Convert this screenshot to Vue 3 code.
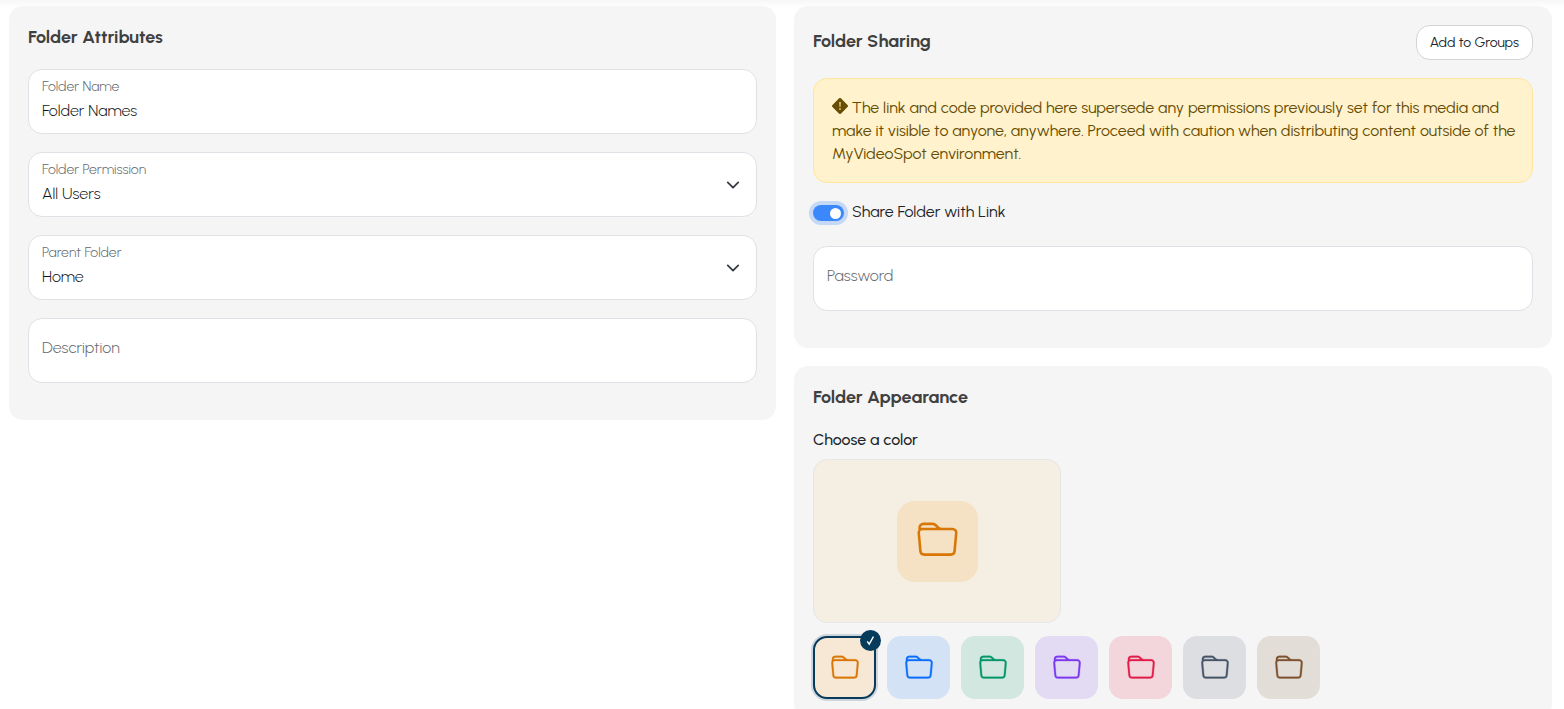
<script setup>
import { ref, computed } from 'vue'

const folderName = ref('Folder Names')
const permission = ref('All Users')
const parent = ref('Home')
const description = ref('')
const shareLink = ref(true)
const password = ref('')

const colors = [
  { name: 'Orange', icon: '#d97706', tint: '#f6e8d4', preview: '#f5eee2', tile: '#f5e1c4' },
  { name: 'Blue', icon: '#0d6efd', tint: '#d4e2f6', preview: '#e4ebf5', tile: '#c6daf7' },
  { name: 'Green', icon: '#059669', tint: '#d1e7df', preview: '#e3eeea', tile: '#c1e0d5' },
  { name: 'Purple', icon: '#7c3aed', tint: '#e3daf4', preview: '#ece7f4', tile: '#dacdf4' },
  { name: 'Red', icon: '#e11d48', tint: '#f3d5dc', preview: '#f4e5e8', tile: '#f2c6d0' },
  { name: 'Slate', icon: '#475569', tint: '#dcdee1', preview: '#e8e9eb', tile: '#d0d4d8' },
  { name: 'Brown', icon: '#7c5230', tint: '#e3ddd7', preview: '#ece9e6', tile: '#dad2ca' }
]
const selectedName = ref('Orange')
const selected = computed(() => colors.find((c) => c.name === selectedName.value))

const folderPath =
  'M.54 3.87.5 3a2 2 0 0 1 2-2h3.672a2 2 0 0 1 1.414.586l.828.828A2 2 0 0 0 9.828 3h3.982a2 2 0 0 1 1.992 2.181l-.637 7A2 2 0 0 1 13.174 14H2.826a2 2 0 0 1-1.991-1.819l-.637-7a2 2 0 0 1 .342-1.31zM2.19 4a1 1 0 0 0-.996 1.09l.637 7a1 1 0 0 0 .995.91h10.348a1 1 0 0 0 .995-.91l.637-7A1 1 0 0 0 13.81 4H2.19zm4.69-1.707A1 1 0 0 0 6.172 2H2.5a1 1 0 0 0-1 .981l.006.139C1.72 3.042 1.95 3 2.19 3h5.396l-.707-.707z'
</script>

<template>
  <main class="page">
    <section class="panel">
      <h2 class="title">Folder Attributes</h2>
      <div class="fields">
        <div class="field">
          <div class="stack">
            <label for="folder-name">Folder Name</label>
            <input id="folder-name" v-model="folderName" type="text" />
          </div>
        </div>
        <div class="field">
          <div class="stack">
            <label for="folder-permission">Folder Permission</label>
            <select id="folder-permission" v-model="permission">
              <option>All Users</option>
            </select>
          </div>
          <svg class="chevron" viewBox="0 0 16 16" aria-hidden="true"><path d="m2 5 6 6 6-6" /></svg>
        </div>
        <div class="field">
          <div class="stack">
            <label for="parent-folder">Parent Folder</label>
            <select id="parent-folder" v-model="parent">
              <option>Home</option>
            </select>
          </div>
          <svg class="chevron" viewBox="0 0 16 16" aria-hidden="true"><path d="m2 5 6 6 6-6" /></svg>
        </div>
        <div class="field empty">
          <input v-model="description" type="text" placeholder="Description" aria-label="Description" />
        </div>
      </div>
    </section>

    <div class="column">
      <section class="panel">
        <div class="header">
          <h2 class="title">Folder Sharing</h2>
          <button class="groups" type="button">Add to Groups</button>
        </div>
        <p class="notice">
          <svg class="warning" viewBox="0 0 16 16" aria-hidden="true">
            <path class="diamond" d="M6.9.5a1.6 1.6 0 0 1 2.2 0l6.4 6.4a1.6 1.6 0 0 1 0 2.2l-6.4 6.4a1.6 1.6 0 0 1-2.2 0L.5 9.1a1.6 1.6 0 0 1 0-2.2z" />
            <path class="mark" d="M7.1 4h1.8l-.4 5h-1zM7.1 10.2h1.8v1.6H7.1z" />
          </svg>
          The link and code provided here supersede any permissions previously set for this media and make it visible to anyone, anywhere. Proceed with caution when distributing content outside of the MyVideoSpot environment.
        </p>
        <div class="switch-row">
          <input id="share-link" v-model="shareLink" class="switch" type="checkbox" role="switch" />
          <label for="share-link">Share Folder with Link</label>
        </div>
        <div class="field empty">
          <input v-model="password" type="password" placeholder="Password" aria-label="Password" />
        </div>
      </section>

      <section class="panel appearance">
        <h2 class="title">Folder Appearance</h2>
        <h3 class="subtitle">Choose a color</h3>
        <div class="preview" :style="{ background: selected.preview }">
          <div class="tile" :style="{ background: selected.tile, color: selected.icon }">
            <svg class="folder-large" viewBox="0 0 16 16" aria-hidden="true"><path :d="folderPath" /></svg>
          </div>
        </div>
        <div class="swatches">
          <button
            v-for="c in colors"
            :key="c.name"
            type="button"
            class="swatch"
            :class="{ active: c.name === selectedName }"
            :style="{ background: c.tint, color: c.icon }"
            :aria-label="c.name"
            :aria-pressed="c.name === selectedName"
            @click="selectedName = c.name"
          >
            <svg class="folder-small" viewBox="0 0 16 16" aria-hidden="true"><path :d="folderPath" /></svg>
            <span v-if="c.name === selectedName" class="badge">
              <svg viewBox="0 0 12 12" aria-hidden="true"><path d="M2.4 7 4.6 10 9.2 1.8" /></svg>
            </span>
          </button>
        </div>
      </section>
    </div>
  </main>
</template>

<style>
body {
  margin: 0;
  background: #fff;
}
</style>

<style scoped>
* {
  box-sizing: border-box;
}
.page {
  display: grid;
  grid-template-columns: 767fr 758fr;
  align-items: start;
  gap: 18px;
  padding: 6px 12px 0 9px;
  background: linear-gradient(#f7f7f7, #fff 8px);
  color: #212529;
  font: 16px/24px Urbanist, Lato, sans-serif;
}
.column {
  display: grid;
  gap: 18px;
  min-width: 0;
}
.panel {
  min-width: 0;
  padding: 19px 19px 37px;
  border-radius: 14px;
  background: #f5f5f5;
}
.title {
  margin: 0;
  color: #404040;
  font-size: 18px;
  line-height: 24px;
  font-weight: 700;
}
.fields {
  display: grid;
  gap: 18px;
  margin-top: 20px;
}
.field {
  display: flex;
  align-items: center;
  height: 65px;
  padding: 0 16px 0 13px;
  border: 1px solid #dee2e6;
  border-radius: 14px;
  background: #fff;
  font-weight: 300;
}
.stack {
  display: flex;
  flex: 1;
  flex-direction: column;
  padding-bottom: 6px;
}
.stack label {
  color: #64686c;
  font-size: 14px;
  line-height: 24px;
}
.field input,
.field select {
  width: 100%;
  height: 24px;
  padding: 0;
  border: 0;
  outline: 0;
  appearance: none;
  background: transparent;
  color: #14171a;
  font: inherit;
}
.field.empty {
  padding-bottom: 6px;
}
.field input::placeholder {
  color: #64686c;
  opacity: 1;
}
.chevron {
  width: 14px;
  height: 14px;
  fill: none;
  stroke: #343a40;
  stroke-width: 2;
  stroke-linecap: round;
  stroke-linejoin: round;
}
.header {
  display: flex;
  align-items: flex-start;
  justify-content: space-between;
}
.header .title {
  padding-top: 4px;
}
.groups {
  height: 35px;
  padding: 0 13px;
  border: 1px solid #d4d4d4;
  border-radius: 14px;
  background: #fff;
  color: #212529;
  font: inherit;
  font-size: 14px;
}
.notice {
  margin: 18px 0;
  padding: 17px 14px 17px 18px;
  border: 1px solid #ffe69c;
  border-radius: 14px;
  background: #fff2cd;
  color: #664d03;
  line-height: 23px;
}
.warning {
  width: 16px;
  height: 16px;
  vertical-align: -1px;
}
.diamond {
  fill: #664d03;
}
.mark {
  fill: #e0c98a;
}
.switch-row {
  display: flex;
  align-items: center;
  gap: 8px;
  margin-bottom: 21px;
}
.switch-row label {
  padding-bottom: 2px;
  line-height: 22px;
}
.switch {
  display: flex;
  align-items: center;
  width: 31px;
  height: 16px;
  margin: 0;
  padding: 0 3px;
  border-radius: 8px;
  appearance: none;
  background: #adb5bd;
}
.switch::before {
  width: 11px;
  height: 11px;
  border-radius: 50%;
  background: #fff;
  content: '';
}
.switch:checked {
  justify-content: flex-end;
  background: #3b88fd;
  box-shadow: 0 0 0 4px #c5d9f6;
}
.subtitle {
  margin: 19px 0 7px;
  font-size: 16px;
  line-height: 24px;
  font-weight: 500;
}
.appearance {
  padding-bottom: 19px;
}
.preview {
  display: flex;
  align-items: center;
  justify-content: center;
  width: 248px;
  height: 164px;
  border: 1px solid #e6e6e6;
  border-radius: 14px;
}
.tile {
  display: flex;
  align-items: center;
  justify-content: center;
  width: 81px;
  height: 81px;
  padding-bottom: 1px;
  border-radius: 18px;
}
.folder-large {
  width: 41px;
  height: 41px;
  fill: currentColor;
}
.swatches {
  display: flex;
  flex-wrap: wrap;
  gap: 11px;
  margin-top: 13px;
}
.swatch {
  position: relative;
  display: flex;
  align-items: center;
  justify-content: center;
  width: 63px;
  height: 63px;
  padding: 0;
  border: 0;
  border-radius: 14px;
}
.swatch.active {
  border: 2px solid #063b5c;
  box-shadow: 0 0 0 2px #ccd5dc;
}
.folder-small {
  width: 28px;
  height: 28px;
  fill: currentColor;
  stroke: currentColor;
  stroke-width: 0.15;
}
.badge {
  position: absolute;
  top: -8px;
  right: -7px;
  display: flex;
  align-items: center;
  justify-content: center;
  width: 21px;
  height: 21px;
  border-radius: 50%;
  background: #063b5c;
}
.badge svg {
  width: 11px;
  height: 11px;
  fill: none;
  stroke: #fff;
  stroke-width: 1.5;
}
</style>
